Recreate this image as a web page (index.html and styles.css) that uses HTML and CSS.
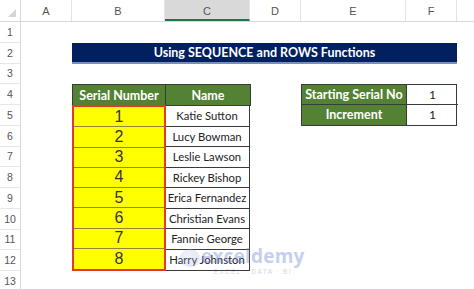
FILE: index.html
```html
<!DOCTYPE html>
<html>
<head>
<meta charset="utf-8">
<link rel="stylesheet" href="styles.css">
</head>
<body>
<div class="sheet">
  <div class="colhead">
    <div class="corner"><span class="tri"></span></div>
    <div class="ch w-a">A</div>
    <div class="ch w-b">B</div>
    <div class="ch w-c sel">C</div>
    <div class="ch w-d">D</div>
    <div class="ch w-e">E</div>
    <div class="ch w-f">F</div>
    <div class="ch w-g"></div>
  </div>
  <div class="body">
    <div class="rowhead">
      <div class="rh">1</div><div class="rh">2</div><div class="rh">3</div><div class="rh">4</div>
      <div class="rh">5</div><div class="rh">6</div><div class="rh">7</div><div class="rh">8</div>
      <div class="rh">9</div><div class="rh">10</div><div class="rh">11</div><div class="rh">12</div>
      <div class="rh">13</div>
    </div>
    <div class="canvas">
      <div class="title">Using SEQUENCE and ROWS Functions</div>
      <div class="list">
        <div class="hd">Serial Number</div>
        <div class="hd">Name</div>
        <div class="serials">
          <div class="num">1</div><div class="num">2</div><div class="num">3</div><div class="num">4</div>
          <div class="num">5</div><div class="num">6</div><div class="num">7</div><div class="num">8</div>
        </div>
        <div class="names">
          <div class="nm">Katie Sutton</div>
          <div class="nm">Lucy Bowman</div>
          <div class="nm">Leslie Lawson</div>
          <div class="nm">Rickey Bishop</div>
          <div class="nm">Erica Fernandez</div>
          <div class="nm">Christian Evans</div>
          <div class="nm">Fannie George</div>
          <div class="nm">Harry Johnston</div>
        </div>
      </div>
      <div class="params">
        <div class="hd">Starting Serial No</div>
        <div class="val">1</div>
        <div class="hd">Increment</div>
        <div class="val">1</div>
      </div>
      <div class="watermark">
        <div class="wm-logo"></div>
        <div class="wm-text">
          <span class="wm-name">exceldemy</span>
          <span class="wm-sub">EXCEL · DATA · BI</span>
        </div>
      </div>
    </div>
  </div>
</div>
</body>
</html>
```
FILE: styles.css
```css
html, body {
  margin: 0;
  padding: 0;
  background: #ffffff;
}
body {
  width: 474px;
  height: 289px;
  overflow: hidden;
  font-family: "Lato", "Liberation Sans", sans-serif;
  color: #222;
}
.sheet {
  display: flex;
  flex-direction: column;
}
.colhead {
  display: flex;
  height: 22px;
  border-bottom: 1px solid #d9d9d9;
  box-sizing: border-box;
}
.corner {
  width: 21px;
  flex: none;
  position: relative;
  border-right: 1px solid #d9d9d9;
  box-sizing: border-box;
}
.tri {
  position: absolute;
  right: 4px;
  bottom: 4px;
  width: 0;
  height: 0;
  border-left: 8px solid transparent;
  border-bottom: 8px solid #d6d6d6;
}
.ch {
  flex: none;
  display: flex;
  align-items: center;
  justify-content: center;
  font-family: "Liberation Sans", sans-serif;
  font-size: 11px;
  color: #555;
  border-right: 1px solid #e3e3e3;
  box-sizing: border-box;
  padding-top: 1px;
}
.ch.sel {
  background: #d9d9d9;
  border-bottom: 2px solid #217346;
  padding-top: 3px;
}
.w-a { width: 51px; }
.w-b { width: 93px; }
.w-c { width: 85px; }
.w-d { width: 51px; }
.w-e { width: 105px; }
.w-f { width: 51px; }
.w-g { width: 17px; border-right: none; }
.body {
  display: flex;
}
.rowhead {
  width: 21px;
  flex: none;
  display: grid;
  grid-template-rows: repeat(13, 20.75px);
  border-right: 1px solid #d9d9d9;
  box-sizing: border-box;
}
.rh {
  display: flex;
  align-items: center;
  justify-content: center;
  font-family: "Liberation Sans", sans-serif;
  font-size: 10.5px;
  color: #555;
  border-bottom: 1px solid #e6e6e6;
}
.canvas {
  position: relative;
  display: grid;
  grid-template-columns: 51px 93px 85px 51px 105px 51px 17px;
  grid-template-rows: repeat(13, 20.75px);
}
.title {
  grid-column: 2 / 7;
  grid-row: 2;
  background: #002060;
  color: #fff;
  font-weight: 700;
  font-size: 12.5px;
  display: flex;
  align-items: center;
  justify-content: center;
  border-bottom: 2px solid #7d8fb8;
  white-space: nowrap;
}
.list {
  grid-column: 2 / 4;
  grid-row: 4 / 13;
  display: grid;
  grid-template-columns: 93px 85px;
  grid-template-rows: 20.75px 166px;
  min-height: 0;
}
.hd {
  background: #548235;
  color: #fff;
  font-weight: 700;
  font-size: 12.5px;
  display: flex;
  align-items: center;
  justify-content: center;
  border: 1px solid #3a3a3a;
  box-sizing: border-box;
  margin: 0 -1px -1px 0;
  white-space: nowrap;
}
.serials {
  display: grid;
  grid-template-rows: repeat(8, 1fr);
  border: 2px solid #e5372a;
  box-sizing: border-box;
  background: #ffff00;
  margin-right: -1px;
  position: relative;
  z-index: 1;
  min-height: 0;
  height: 166px;
}
.num {
  display: flex;
  align-items: center;
  justify-content: center;
  font-family: "Liberation Sans", sans-serif;
  font-size: 16px;
  line-height: 1;
  color: #333;
  border-bottom: 1px solid #8a8a3a;
  min-height: 0;
}
.num:last-child {
  border-bottom: none;
}
.names {
  display: grid;
  grid-template-rows: repeat(8, 1fr);
  border: 1px solid #3a3a3a;
  border-left: none;
  box-sizing: border-box;
  min-height: 0;
  height: 166px;
}
.nm {
  display: flex;
  align-items: center;
  justify-content: center;
  font-size: 11.3px;
  line-height: 1;
  color: #222;
  border-bottom: 1px solid #3a3a3a;
  white-space: nowrap;
  min-height: 0;
}
.nm:last-child {
  border-bottom: none;
}
.params {
  grid-column: 5 / 7;
  grid-row: 4 / 6;
  display: grid;
  grid-template-columns: 105px 51px;
  grid-template-rows: 1fr 1fr;
  border: 1px solid #3a3a3a;
  box-sizing: border-box;
}
.params .hd {
  border: none;
  margin: 0;
  border-right: 1px solid #3a3a3a;
}
.params .hd:nth-child(1) {
  border-bottom: 1px solid #3a3a3a;
}
.val {
  display: flex;
  align-items: center;
  justify-content: center;
  font-size: 12px;
  color: #222;
}
.val:nth-child(2) {
  border-bottom: 1px solid #3a3a3a;
}
.watermark {
  position: absolute;
  left: 159px;
  top: 225px;
  display: flex;
  align-items: flex-start;
  gap: 1px;
  opacity: 0.4;
  pointer-events: none;
  z-index: 2;
}
.wm-logo {
  width: 20px;
  height: 18px;
  margin-top: 2px;
  border-radius: 50%;
  background: radial-gradient(circle at 40% 40%, #c9d3ee, #8aa0d6);
  opacity: 0.7;
}
.wm-text {
  display: flex;
  flex-direction: column;
  align-items: center;
  line-height: 1;
}
.wm-name {
  font-family: "Open Sans", sans-serif;
  font-weight: 700;
  font-size: 19px;
  color: #6f8ad4;
  letter-spacing: 0.2px;
}
.wm-sub {
  font-family: "Liberation Sans", sans-serif;
  font-size: 6.5px;
  color: #8a9bc8;
  letter-spacing: 1.4px;
  margin-top: 3px;
}
```
